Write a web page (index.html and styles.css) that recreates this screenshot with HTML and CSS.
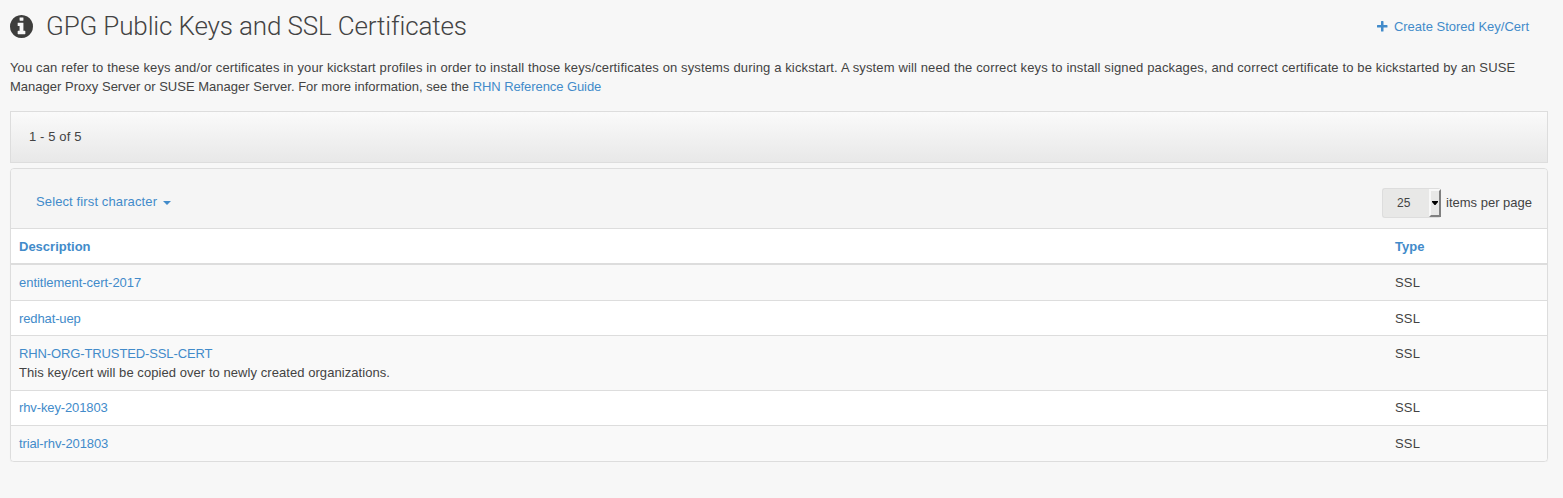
FILE: index.html
```html
<!DOCTYPE html>
<html lang="en">
<head>
<meta charset="utf-8">
<title>GPG Public Keys and SSL Certificates</title>
<link rel="stylesheet" href="styles.css">
</head>
<body>
<main class="page">
  <header class="page-header">
    <svg class="info-icon" viewBox="128 128 1536 1536" aria-hidden="true"><path d="M1152 1376v-160q0-14-9-23t-23-9h-96v-512q0-14-9-23t-23-9h-320q-14 0-23 9t-9 23v160q0 14 9 23t23 9h96v320h-96q-14 0-23 9t-9 23v160q0 14 9 23t23 9h448q14 0 23-9t9-23zM1024 480v-160q0-14-9-23t-23-9h-192q-14 0-23 9t-9 23v160q0 14 9 23t23 9h192q14 0 23-9t9-23zM1664 896q0 209-103 385.5t-279.5 279.5-385.5 103-385.5-103-279.5-279.5-103-385.5 103-385.5 279.5-279.5 385.5-103 385.5 103 279.5 279.5 103 385.5z"/></svg>
    <h1 class="title">GPG Public Keys and SSL Certificates</h1>
    <a class="create" href="#"><svg class="plus-icon" viewBox="0 0 11 11" aria-hidden="true"><path d="M4.600 0h1.300q.6 0 .6.600V4h3.400q.6 0 .6.600v1.300q0 .6-.6.600H6.500v3.400q0 .6-.6.600H4.600q-.6 0-.6-.6V6.500H.6Q0 6.500 0 5.900V4.600Q0 4 .6 4H4V.6Q4 0 4.600 0z"/></svg><span>Create Stored Key/Cert</span></a>
  </header>
  <p class="intro"><span class="line line-one">You can refer to these keys and/or certificates in your kickstart profiles in order to install those keys/certificates on systems during a kickstart. A system will need the correct keys to install signed packages, and correct certificate to be kickstarted by an SUSE</span> <span class="line line-two">Manager Proxy Server or SUSE Manager Server. For more information, see the <a class="guide" href="#">RHN Reference Guide</a></span></p>
  <div class="range-bar"><span class="range">1 - 5 of 5</span></div>
  <section class="panel">
    <div class="panel-head">
      <a class="alpha" href="#"><span class="alpha-text">Select first character</span><span class="caret"></span></a>
      <div class="paging">
        <div class="select"><span class="value">25</span><span class="select-button"><svg class="arrow" viewBox="0 0 6 4"><path d="M0 0h6v1L3.500 4h-1L0 1z"/></svg></span></div>
        <span class="per-page">items per page</span>
      </div>
    </div>
    <div class="row head"><a href="#">Description</a><a href="#">Type</a></div>
    <div class="row odd"><a class="key" href="#">entitlement-cert-2017</a><span class="type">SSL</span></div>
    <div class="row even"><a class="key narrow" href="#">redhat-uep</a><span class="type">SSL</span></div>
    <div class="row odd tall"><div><a class="key narrow" href="#">RHN-ORG-TRUSTED-SSL-CERT</a><div class="note">This key/cert will be copied over to newly created organizations.</div></div><span class="type">SSL</span></div>
    <div class="row even raised"><a class="key narrow" href="#">rhv-key-201803</a><span class="type">SSL</span></div>
    <div class="row odd last"><a class="key narrow" href="#">trial-rhv-201803</a><span class="type">SSL</span></div>
  </section>
</main>
</body>
</html>
```
FILE: styles.css
```css
* { box-sizing: border-box; }
body {
  margin: 0;
  background: #f7f7f7;
  color: #434343;
  font: 13px/19px "Liberation Sans", Arial, sans-serif;
}
a { color: #428bca; text-decoration: none; }
.page { padding: 0 15px 0 10px; }
.page-header { display: flex; align-items: center; height: 52px; padding-right: 19px; }
.info-icon { width: 23px; height: 23px; fill: #3d3d3c; }
.title { margin: 0 0 0 13px; font: 300 26px/36px Roboto, sans-serif; letter-spacing: -.14px; }
.create { display: flex; align-items: center; gap: 6px; margin: 1px 0 0 auto; }
.plus-icon { width: 11px; height: 11px; fill: #428bca; }
.intro { margin: 6px 0 15px; }
.line { display: block; width: max-content; white-space: nowrap; }
.line-one { letter-spacing: .133px; }
.line-two { letter-spacing: .013px; }
.guide { letter-spacing: -.08px; }
.range-bar {
  display: flex;
  align-items: center;
  height: 52px;
  padding: 0 0 2px 18px;
  border: 1px solid #ddd;
  background: linear-gradient(#fafafa, #e8e8e8);
}
.range { letter-spacing: .12px; }
.panel {
  margin-top: 5px;
  border: 1px solid #ddd;
  border-radius: 4px;
  overflow: hidden;
  box-shadow: 0 1px 1px rgba(0, 0, 0, .05);
}
.panel-head {
  display: flex;
  justify-content: space-between;
  height: 60px;
  padding: 19px 15px 0 25px;
  border-bottom: 1px solid #ddd;
  background: #f5f5f5;
}
.alpha { display: flex; align-items: center; gap: 6px; height: 26px; letter-spacing: .12px; }
.caret { border: 4px solid transparent; border-top-color: #428bca; border-bottom: 0; margin-top: 4px; }
.paging { display: flex; align-items: center; gap: 5px; height: 30px; }
.per-page { padding-bottom: 2px; }
.select {
  display: flex;
  align-items: center;
  justify-content: space-between;
  width: 59px;
  height: 30px;
  padding-left: 14px;
  border: 1px solid #ddd;
  border-right: 0;
  border-radius: 3px;
  background: #e8e8e7;
  font-size: 12px;
}
.value { letter-spacing: .2px; }
.select-button {
  display: flex;
  align-items: center;
  justify-content: center;
  width: 12px;
  height: 28px;
  border: 2px solid;
  border-color: #f8f8f8 #808080 #808080 #f8f8f8;
  background: #e8e8e7;
}
.arrow { flex: none; width: 6px; height: 4px; fill: #000; }
.row {
  display: grid;
  grid-template-columns: 1376px 1fr;
  height: 35px;
  padding: 8px 8px 0;
  border-bottom: 1px solid #ddd;
}
.head { height: 36px; border-bottom-width: 2px; background: #fff; font-weight: bold; }
.odd { height: 36px; background: #f9f9f9; }
.even { background: #fff; }
.tall { height: 55px; }
.raised { padding-top: 7px; }
.last { height: 35px; border-bottom: 0; }
.key { letter-spacing: -.03px; }
.narrow { letter-spacing: -.12px; }
.note { letter-spacing: .06px; }
.type { letter-spacing: .2px; }
```
